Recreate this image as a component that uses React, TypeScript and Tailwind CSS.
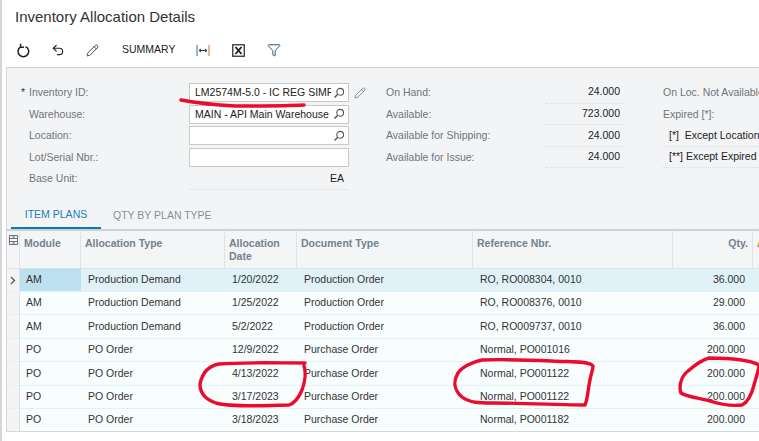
import React from 'react';
import { Funnel, Pencil, Undo2 } from 'lucide-react';

const rows = [
    { h: 'h-[23px]', mod: 'AM', type: 'Production Demand', date: '1/20/2022', doc: 'Production Order', ref: 'RO, RO008304, 0010', qty: '36.000' },
    { h: 'h-[23px]', mod: 'AM', type: 'Production Demand', date: '1/25/2022', doc: 'Production Order', ref: 'RO, RO008376, 0010', qty: '29.000' },
    { h: 'h-[24px]', mod: 'AM', type: 'Production Demand', date: '5/2/2022', doc: 'Production Order', ref: 'RO, RO009737, 0010', qty: '36.000' },
    { h: 'h-[23px]', mod: 'PO', type: 'PO Order', date: '12/9/2022', doc: 'Purchase Order', ref: 'Normal, PO001016', qty: '200.000' },
    { h: 'h-[24px]', mod: 'PO', type: 'PO Order', date: '4/13/2022', doc: 'Purchase Order', ref: 'Normal, PO001122', qty: '200.000' },
    { h: 'h-[23px]', mod: 'PO', type: 'PO Order', date: '3/17/2023', doc: 'Purchase Order', ref: 'Normal, PO001122', qty: '200.000' },
    { h: 'h-[23px]', mod: 'PO', type: 'PO Order', date: '3/18/2023', doc: 'Purchase Order', ref: 'Normal, PO001182', qty: '200.000' },
];

const columns = 'grid grid-cols-[13px_61px_144px_72px_176px_200px_80px_1fr]';

function SearchIcon() {
    return (
        <svg width="12" height="12" viewBox="0 0 12 12" fill="none" stroke="#555" strokeWidth="1.1" className="shrink-0">
            <circle cx="7.2" cy="4.8" r="3.4" />
            <path d="M4.8 7.2 1.5 10.5" strokeWidth="1.5" />
        </svg>
    );
}

function FormLabel({ children }: { children: React.ReactNode }) {
    return <div className="h-[21.6px] flex items-center text-[#6f7579] whitespace-nowrap">{children}</div>;
}

function Lookup({ value, search = true }: { value?: string; search?: boolean }) {
    return (
        <div className="h-[21.6px] flex items-center">
            <div className="w-[160px] h-[19px] bg-white border border-[#c9c9c9] flex items-center pl-[5px] pr-[3px] gap-[2px]">
                <span className="flex-1 overflow-hidden whitespace-nowrap text-[#222]">{value}</span>
                {search && <SearchIcon />}
            </div>
        </div>
    );
}

function Stat({ value }: { value: string }) {
    return (
        <div className="h-[21.6px] w-[80px] flex items-center justify-end pr-[6px] text-[#222] border-b border-dotted border-[#dcdcdc]">
            {value}
        </div>
    );
}

function Scribbles() {
    return (
        <svg width="759" height="441" viewBox="0 0 759 441" fill="none" stroke="#ee0a2c" strokeWidth="3.4" strokeLinecap="round" strokeLinejoin="round" className="absolute left-0 top-0 pointer-events-none">
            <path d="M179 100C195 103 215 105 233 106C258 106 282 106 302 105" />
            <path d="M303 363C275 363 240 362 217 364C206 366 200 374 198 384C198 394 205 400 214 403C228 407 262 406 287 405C293 403 297 397 300 390C303 382 304 372 302 366" />
            <path d="M590 365C584 361 570 362 550 361C525 360 500 359 480 360C470 362 460 367 456 373C451 381 452 390 460 397C468 403 478 403 490 403C525 403 560 405 583 405C586 398 586 388 588 380C589 374 591 369 591 366" />
            <path d="M757 365C748 360 733 358 707 358C699 360 693 365 686 371C678 377 677 388 679 393C685 397 697 398 708 401C720 405 730 406 740 405C746 402 750 393 752 385C754 378 756 372 757 366" />
        </svg>
    );
}

export default function App() {
    return (
        <div className="relative w-[759px] h-[441px] overflow-hidden bg-white border-l-2 border-[#d6d6d6] font-['Liberation_Sans',Arial,sans-serif] text-[10.5px]">
            {/* Page title */}
            <div className="h-[35px] pl-[13px] pt-[7px] text-[15px] leading-[20px] text-[#333]">Inventory Allocation Details</div>

            {/* Toolbar */}
            <div className="h-[32px] pb-[2px] flex items-center text-[#222]">
                <svg width="13" height="15" viewBox="0 0 13 15" fill="none" stroke="#222" strokeWidth="1.5" className="ml-[15px]">
                    <path d="M8.6 3.6a5.3 5.3 0 1 1-5 .3" />
                    <path d="M3.6 0.8v3.4H7" />
                </svg>
                <Undo2 size={14} strokeWidth={1.9} className="ml-[21px]" />
                <Pencil size={13} strokeWidth={1.5} className="ml-[21px]" />
                <span className="ml-[23px] text-[10.5px] w-[54px]">SUMMARY</span>
                <svg width="14" height="13" viewBox="0 0 14 13" fill="none" className="ml-[20px]">
                    <path d="M1 1v11" stroke="#2b6cb0" />
                    <path d="M13 1v11" stroke="#d9691e" />
                    <path d="M3 6.5h8M3 6.5l2-1.6M3 6.5l2 1.6M11 6.5 9 4.9M11 6.5 9 8.1" stroke="#333" />
                </svg>
                <svg width="13" height="13" viewBox="0 0 13 13" fill="none" className="ml-[22px]">
                    <rect x="0.75" y="0.75" width="11.5" height="11.5" stroke="#333" strokeWidth="1.3" />
                    <path d="M3.5 3 9.5 10M9.5 3 3.5 10" stroke="#222" strokeWidth="1.9" />
                </svg>
                <Funnel size={14} strokeWidth={1.6} className="ml-[22px] text-[#1d4f6e]" />
            </div>

            <div className="ml-[4px] border-l border-[#d6d6d6]">
                {/* Summary form */}
                <div className="h-[162px] bg-[#f3f4f6] border-t border-[#d4d4d4] pt-[14px] flex">
                    <div className="w-[8px] ml-[14px] text-[#333] leading-[21.6px]">*</div>
                    <div className="w-[160px]">
                        <FormLabel>Inventory ID:</FormLabel>
                        <FormLabel>Warehouse:</FormLabel>
                        <FormLabel>Location:</FormLabel>
                        <FormLabel>Lot/Serial Nbr.:</FormLabel>
                        <FormLabel>Base Unit:</FormLabel>
                    </div>
                    <div className="w-[160px]">
                        <Lookup value="LM2574M-5.0 - IC REG SIMPLE" />
                        <Lookup value="MAIN - API Main Warehouse" />
                        <Lookup />
                        <Lookup search={false} />
                        <div className="h-[21.6px] flex items-center justify-end pr-[5px] text-[#222] border-b border-dotted border-[#dcdcdc]">EA</div>
                    </div>
                    <div className="w-[37px] pl-[5px]">
                        <Pencil size={12} strokeWidth={1.2} className="mt-[5px] text-[#444]" />
                    </div>
                    <div className="w-[160px]">
                        <FormLabel>On Hand:</FormLabel>
                        <FormLabel>Available:</FormLabel>
                        <FormLabel>Available for Shipping:</FormLabel>
                        <FormLabel>Available for Issue:</FormLabel>
                    </div>
                    <div className="w-[117px]">
                        <Stat value="24.000" />
                        <Stat value="723.000" />
                        <Stat value="24.000" />
                        <Stat value="24.000" />
                    </div>
                    <div className="flex-1 overflow-hidden whitespace-nowrap">
                        <FormLabel>On Loc. Not Available:</FormLabel>
                        <FormLabel>Expired [*]:</FormLabel>
                        <div className="h-[21.6px] flex items-center pl-[6px] text-[#222] border-b border-dotted border-[#dcdcdc]">[*]&nbsp; Except Location</div>
                        <div className="h-[21.6px] flex items-center pl-[6px] text-[#222] border-b border-dotted border-[#dcdcdc]">[**] Except Expired</div>
                    </div>
                </div>

                {/* Tabs */}
                <div className="-mt-[26px] relative h-[26px] flex items-end pl-[4px] text-[10.5px] uppercase">
                    <div className="w-[90px] h-[26px] flex items-center justify-center text-[#1a7fb4] border-b-[2px] border-[#0f78b0]">Item Plans</div>
                    <div className="ml-[12px] h-[26px] flex items-center text-[#8a8f93]">Qty by Plan Type</div>
                </div>

                {/* Allocation grid */}
                <div className="border-t-2 border-[#d0d3d6]">
                    <div className={`${columns} h-[38px] bg-[#f3f5f7] border-b border-[#d9e2e8] font-bold text-[#74828c]`}>
                        <div className="border-r border-[#dde3e8] flex justify-center pt-[4px]">
                            <svg width="9" height="10" viewBox="0 0 9 10" fill="none" stroke="#6b7378">
                                <rect x="0.5" y="0.5" width="8" height="9" />
                                <path d="M0.5 3.5h8M0.5 6.5h8M3 2h3M3 8h3" />
                            </svg>
                        </div>
                        <div className="border-r border-[#dde3e8] pl-[4px] pt-[5px]">Module</div>
                        <div className="border-r border-[#dde3e8] pl-[4px] pt-[5px]">Allocation Type</div>
                        <div className="border-r border-[#dde3e8] pl-[4px] pt-[6px] leading-[13px]">Allocation Date</div>
                        <div className="border-r border-[#dde3e8] pl-[4px] pt-[5px]">Document Type</div>
                        <div className="border-r border-[#dde3e8] pl-[4px] pt-[5px]">Reference Nbr.</div>
                        <div className="border-r border-[#dde3e8] pr-[4px] pt-[5px] text-right">Qty.</div>
                        <div className="pl-[4px] pt-[5px] text-[#c98a3a]">A</div>
                    </div>
                    {rows.map((row, i) => (
                        <div key={i} className={`${columns} ${row.h} border-b ${i === 6 ? 'border-[#d4d6d8]' : 'border-[#e3f0f4]'} ${i === 0 ? 'bg-[#e0f1f8]' : 'bg-[#f8fefe]'} text-[#333] items-stretch`}>
                            <div className="bg-[#f3f4f6] border-r border-[#dfe3e6] flex items-center justify-center">
                                {i === 0 && (
                                    <svg width="6" height="9" viewBox="0 0 6 9" fill="none" stroke="#555" strokeWidth="1.3">
                                        <path d="M1 1l3.5 3.5L1 8" />
                                    </svg>
                                )}
                            </div>
                            <div className={`pl-[6px] flex items-center ${i === 0 ? 'bg-[#bde0f0]' : ''}`}>{row.mod}</div>
                            <div className="pl-[7px] flex items-center">{row.type}</div>
                            <div className="pl-[7px] flex items-center">{row.date}</div>
                            <div className="pl-[7px] flex items-center">{row.doc}</div>
                            <div className="pl-[7px] flex items-center">{row.ref}</div>
                            <div className="pr-[8px] flex items-center justify-end">{row.qty}</div>
                            <div />
                        </div>
                    ))}
                </div>
            </div>

            <Scribbles />
        </div>
    );
}
